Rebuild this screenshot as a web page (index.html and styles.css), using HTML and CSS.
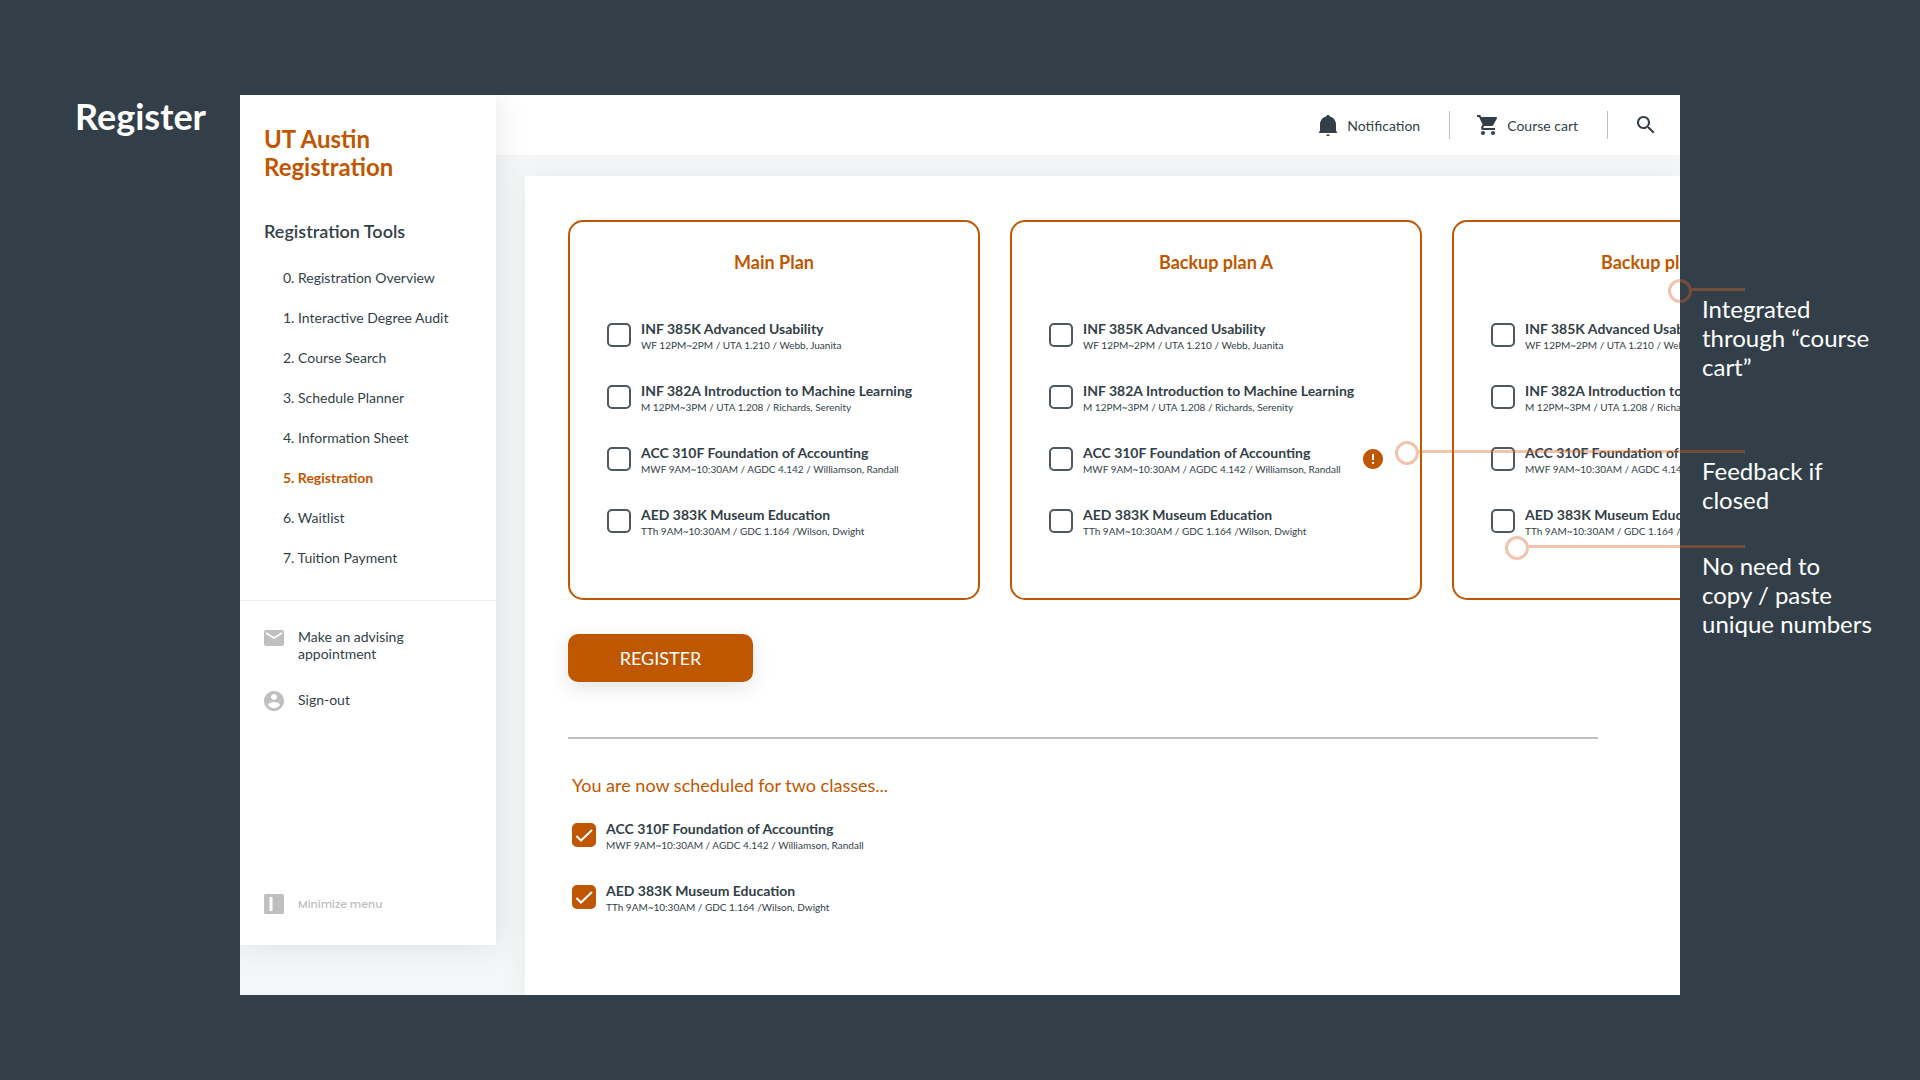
FILE: index.html
```html
<!DOCTYPE html>
<html lang="en">
<head>
<meta charset="utf-8">
<meta name="viewport" content="width=device-width, initial-scale=1">
<title>UT Austin Registration</title>
<link rel="stylesheet" href="styles.css">
</head>
<body>
<div class="board">
  <h1 class="board-title">Register</h1>

  <div class="app">
    <aside class="sidebar">
      <p class="brand">UT Austin Registration</p>
      <nav class="tools" aria-labelledby="tools-title">
        <h2 class="tools-title" id="tools-title">Registration Tools</h2>
        <ul class="tools-list">
          <li><a href="#">0. Registration Overview</a></li>
          <li><a href="#">1. Interactive Degree Audit</a></li>
          <li><a href="#">2. Course Search</a></li>
          <li><a href="#">3. Schedule Planner</a></li>
          <li><a href="#">4. Information Sheet</a></li>
          <li><a class="current" href="#" aria-current="page">5. Registration</a></li>
          <li><a href="#">6. Waitlist</a></li>
          <li><a href="#">7. Tuition Payment</a></li>
        </ul>
      </nav>
      <div class="account">
        <a class="side-link" href="#">
          <svg class="side-icon" viewBox="2 2 20 20" aria-hidden="true"><path d="M20 4H4c-1.100 0-1.990.900-1.990 2L2 18c0 1.100.900 2 2 2h16c1.100 0 2-.900 2-2V6c0-1.100-.900-2-2-2zm0 4l-8 5-8-5V6l8 5 8-5v2z"/></svg>
          <span>Make an advising appointment</span>
        </a>
        <a class="side-link" href="#">
          <svg class="side-icon" viewBox="2 2 20 20" aria-hidden="true"><path d="M12 2C6.480 2 2 6.480 2 12s4.480 10 10 10 10-4.480 10-10S17.520 2 12 2zm0 3c1.660 0 3 1.340 3 3s-1.340 3-3 3-3-1.340-3-3 1.340-3 3-3zm0 14.200c-2.500 0-4.710-1.280-6-3.220.030-1.990 4-3.080 6-3.080 1.990 0 5.970 1.090 6 3.080-1.290 1.940-3.500 3.220-6 3.220z"/></svg>
          <span>Sign-out</span>
        </a>
      </div>
      <button class="minimize" type="button">
        <svg class="side-icon" viewBox="0 0 20 20" aria-hidden="true"><path fill-rule="evenodd" d="M1.500 0h17A1.500 1.500 0 0 1 20 1.500v17a1.500 1.500 0 0 1-1.500 1.500h-17A1.500 1.500 0 0 1 0 18.500v-17A1.500 1.500 0 0 1 1.500 0zM5.500 3v14h3V3z"/></svg>
        <span>Minimize menu</span>
      </button>
    </aside>

    <div class="workspace">
      <header class="topbar">
        <a class="top-link" href="#">
          <svg class="bell" viewBox="3 1 18 21" aria-hidden="true"><path d="M12 22c1.100 0 2-.900 2-1.600h-4c0 .700.900 1.600 2 1.600zM20 17V10.500c0-3.900-2.600-7-6.200-7.900V2.600C13.800 1.700 13 1 12 1s-1.800.700-1.800 1.600C6.600 3.500 4 6.600 4 10.500V17l-1 1v1h18v-1z"/></svg>
          <span>Notification</span>
        </a>
        <a class="top-link" href="#">
          <svg class="cart" viewBox="1 2 20 20" aria-hidden="true"><path d="M7 18c-1.100 0-1.990.900-1.990 2S5.900 22 7 22s2-.900 2-2-.900-2-2-2zM1 2v2h2l3.600 7.590-1.350 2.450c-.160.280-.250.610-.250.960 0 1.100.900 2 2 2h12v-2H7.420c-.140 0-.250-.110-.250-.250l.030-.120.900-1.630h7.450c.750 0 1.410-.410 1.750-1.030l3.580-6.490c.080-.140.120-.310.120-.480 0-.550-.450-1-1-1H5.210l-.940-2H1zm16 16c-1.100 0-1.990.900-1.990 2s.890 2 1.990 2 2-.900 2-2-.900-2-2-2z"/></svg>
          <span>Course cart</span>
        </a>
        <button class="search" type="button" aria-label="Search">
          <svg viewBox="3 3 18 18" aria-hidden="true"><path d="M15.500 14h-.790l-.280-.270C15.410 12.590 16 11.110 16 9.500 16 5.910 13.090 3 9.500 3S3 5.910 3 9.500 5.910 16 9.500 16c1.610 0 3.090-.590 4.230-1.570l.270.280v.790l5 4.990L20.490 19l-4.990-5zm-6 0C7.010 14 5 11.990 5 9.500S7.010 5 9.500 5 14 7.010 14 9.500 11.990 14 9.500 14z"/></svg>
        </button>
      </header>

      <main class="panel">
        <div class="plans">
          <section class="plan">
            <h2 class="plan-title">Main Plan</h2>
            <ul class="courses">
              <li><label class="course"><input class="tick" type="checkbox"><span class="course-text"><b>INF 385K Advanced Usability</b><small>WF 12PM~2PM / UTA 1.210 / Webb, Juanita</small></span></label></li>
              <li><label class="course"><input class="tick" type="checkbox"><span class="course-text"><b>INF 382A Introduction to Machine Learning</b><small>M 12PM~3PM / UTA 1.208 / Richards, Serenity</small></span></label></li>
              <li><label class="course"><input class="tick" type="checkbox"><span class="course-text"><b>ACC 310F Foundation of Accounting</b><small>MWF 9AM~10:30AM / AGDC 4.142 / Williamson, Randall</small></span></label></li>
              <li><label class="course"><input class="tick" type="checkbox"><span class="course-text"><b>AED 383K Museum Education</b><small>TTh 9AM~10:30AM / GDC 1.164 /Wilson, Dwight</small></span></label></li>
            </ul>
          </section>
          <section class="plan">
            <h2 class="plan-title">Backup plan A</h2>
            <ul class="courses">
              <li><label class="course"><input class="tick" type="checkbox"><span class="course-text"><b>INF 385K Advanced Usability</b><small>WF 12PM~2PM / UTA 1.210 / Webb, Juanita</small></span></label></li>
              <li><label class="course"><input class="tick" type="checkbox"><span class="course-text"><b>INF 382A Introduction to Machine Learning</b><small>M 12PM~3PM / UTA 1.208 / Richards, Serenity</small></span></label></li>
              <li class="closed"><label class="course"><input class="tick" type="checkbox"><span class="course-text"><b>ACC 310F Foundation of Accounting</b><small>MWF 9AM~10:30AM / AGDC 4.142 / Williamson, Randall</small></span></label>
                <svg class="alert" viewBox="2 2 20 20" role="img" aria-label="Class closed"><path d="M12 2C6.480 2 2 6.480 2 12s4.480 10 10 10 10-4.480 10-10S17.520 2 12 2zm1 15h-2v-2h2v2zm0-4h-2V7h2v6z"/></svg></li>
              <li><label class="course"><input class="tick" type="checkbox"><span class="course-text"><b>AED 383K Museum Education</b><small>TTh 9AM~10:30AM / GDC 1.164 /Wilson, Dwight</small></span></label></li>
            </ul>
          </section>
          <section class="plan">
            <h2 class="plan-title">Backup plan B</h2>
            <ul class="courses">
              <li><label class="course"><input class="tick" type="checkbox"><span class="course-text"><b>INF 385K Advanced Usability</b><small>WF 12PM~2PM / UTA 1.210 / Webb, Juanita</small></span></label></li>
              <li><label class="course"><input class="tick" type="checkbox"><span class="course-text"><b>INF 382A Introduction to Machine Learning</b><small>M 12PM~3PM / UTA 1.208 / Richards, Serenity</small></span></label></li>
              <li><label class="course"><input class="tick" type="checkbox"><span class="course-text"><b>ACC 310F Foundation of Accounting</b><small>MWF 9AM~10:30AM / AGDC 4.142 / Williamson, Randall</small></span></label></li>
              <li><label class="course"><input class="tick" type="checkbox"><span class="course-text"><b>AED 383K Museum Education</b><small>TTh 9AM~10:30AM / GDC 1.164 /Wilson, Dwight</small></span></label></li>
            </ul>
          </section>
        </div>

        <button class="register" type="button">REGISTER</button>
        <hr class="rule">

        <section class="scheduled">
          <h2 class="scheduled-title">You are now scheduled for two classes...</h2>
          <ul class="courses">
            <li><label class="course"><input class="tick" type="checkbox" checked><span class="course-text"><b>ACC 310F Foundation of Accounting</b><small>MWF 9AM~10:30AM / AGDC 4.142 / Williamson, Randall</small></span></label></li>
            <li><label class="course"><input class="tick" type="checkbox" checked><span class="course-text"><b>AED 383K Museum Education</b><small>TTh 9AM~10:30AM / GDC 1.164 /Wilson, Dwight</small></span></label></li>
          </ul>
        </section>
      </main>
    </div>
  </div>

  <aside class="notes">
    <p class="note note-cart"><span class="pointer"></span>Integrated through “course cart”</p>
    <p class="note note-closed"><span class="pointer"></span>Feedback if closed</p>
    <p class="note note-numbers"><span class="pointer"></span>No need to copy / paste unique numbers</p>
  </aside>
</div>
</body>
</html>
```
FILE: styles.css
```css
:root {
  --ink: #333f48;
  --orange: #bf5700;
  --muted: #bfbfbf;
  --canvas: #f5f6f8;
}

*, *::before, *::after { box-sizing: border-box; }

body {
  margin: 0;
  background: var(--ink);
  color: var(--ink);
  font-family: Lato, "Open Sans", sans-serif;
  font-size: 14px;
  line-height: 17px;
}

h1, h2, p, ul { margin: 0; padding: 0; }
ul { list-style: none; }
a { color: inherit; text-decoration: none; }

button {
  border: 0;
  padding: 0;
  background: none;
  color: inherit;
  font: inherit;
  cursor: pointer;
}

.board {
  display: grid;
  grid-template-columns: 240px minmax(0, 1fr) 240px;
  min-height: 100vh;
  padding: 95px 0 85px;
}

.board-title {
  padding-left: 75px;
  color: #fff;
  font-size: 36px;
  line-height: 42px;
}

.app {
  display: flex;
  align-items: stretch;
  overflow: hidden;
  background: var(--canvas);
}

/* Sidebar */
.sidebar {
  position: relative;
  z-index: 1;
  flex: none;
  display: flex;
  flex-direction: column;
  width: 256px;
  margin-bottom: 50px;
  padding-top: 30px;
  background: #fff;
  box-shadow: 0 0 30px rgba(0, 0, 0, .1);
}

.brand {
  width: 180px;
  padding-left: 24px;
  color: var(--orange);
  font-size: 24px;
  font-weight: 700;
  line-height: 28px;
}

.tools {
  padding: 39px 24px 34px;
  border-bottom: 1px solid #ebebeb;
}

.tools-title {
  font-size: 18px;
  font-weight: 600;
  line-height: 22px;
}

.tools-list {
  display: flex;
  flex-direction: column;
  gap: 23px;
  padding: 27px 0 0 19px;
}

.current {
  color: var(--orange);
  font-weight: 700;
}

.account {
  display: flex;
  flex-direction: column;
  gap: 29px;
  padding: 27px 24px;
}

.side-link {
  display: flex;
  gap: 14px;
}

.side-link span { width: 130px; }

.side-icon {
  flex: none;
  width: 20px;
  height: 20px;
  fill: var(--muted);
}

.minimize {
  display: flex;
  align-items: center;
  gap: 14px;
  margin-top: auto;
  padding: 0 24px 31px;
  color: var(--muted);
  font-family: Poppins, Inter, sans-serif;
  font-size: 11px;
  font-weight: 500;
}

/* Main column */
.workspace {
  flex: 1;
  display: flex;
  flex-direction: column;
  min-width: 0;
}

.topbar {
  display: flex;
  align-items: center;
  justify-content: flex-end;
  height: 60px;
  padding-right: 25px;
  background: #fff;
}

.top-link {
  display: flex;
  align-items: center;
  gap: 10px;
  height: 28px;
  margin-right: 27px;
  padding-right: 29px;
  border-right: 1px solid var(--muted);
}

.topbar svg { fill: var(--ink); }
.bell { width: 18px; height: 21px; }
.cart { width: 20px; height: 20px; }

.search {
  display: flex;
  padding-left: 2px;
}

.search svg { width: 18px; height: 18px; }

.panel {
  flex: 1;
  margin: 21px 0 0 29px;
  padding: 44px 0 60px 43px;
  background: #fff;
  box-shadow: 0 0 30px rgba(0, 0, 0, .05);
}

.plans {
  display: flex;
  gap: 30px;
}

.plan {
  flex: none;
  width: 412px;
  padding: 29px 37px 62px;
  border: 2px solid var(--orange);
  border-radius: 15px;
}

.plan-title {
  margin-bottom: 47px;
  color: var(--orange);
  font-size: 18px;
  font-weight: 700;
  line-height: 22px;
  text-align: center;
}

.courses {
  display: flex;
  flex-direction: column;
  gap: 32px;
}

.course {
  display: flex;
  align-items: center;
  gap: 10px;
}

.course-text {
  display: flex;
  flex-direction: column;
  gap: 3px;
  white-space: nowrap;
}

.course-text b { font-weight: 700; }

.course-text small {
  font-size: 10px;
  line-height: 10px;
}

.tick {
  flex: none;
  appearance: none;
  width: 24px;
  height: 24px;
  margin: 0;
  border: 2px solid #4d5860;
  border-radius: 5px;
}

.tick:checked {
  border-color: var(--orange);
  background: var(--orange) url("data:image/svg+xml,%3Csvg xmlns='http://www.w3.org/2000/svg' viewBox='0 0 20 20'%3E%3Cpath d='M2.500 11l4.500 4.500L18 5' fill='none' stroke='white' stroke-width='2'/%3E%3C/svg%3E") center / 20px 20px no-repeat;
}

.closed {
  display: flex;
  align-items: center;
  justify-content: space-between;
}

.alert {
  flex: none;
  width: 20px;
  height: 20px;
  fill: var(--orange);
}

.register {
  display: block;
  width: 185px;
  height: 48px;
  margin-top: 34px;
  border-radius: 10px;
  background: var(--orange);
  box-shadow: 0 6px 20px rgba(0, 0, 0, .1);
  color: #fff;
  font-size: 18px;
}

.rule {
  height: 2px;
  margin: 55px 82px 35px 0;
  border: 0;
  background: var(--muted);
}

.scheduled { padding-left: 4px; }

.scheduled-title {
  margin-bottom: 24px;
  color: var(--orange);
  font-size: 18px;
  font-weight: 400;
  line-height: 22px;
}

/* Annotations */
.notes {
  position: relative;
  z-index: 2;
  padding-top: 193px;
  color: #fff;
  font-size: 24px;
  line-height: 29px;
}

.note {
  position: relative;
  padding: 6px 44px 0 22px;
}

.note-closed { margin-top: 69px; }
.note-numbers { margin-top: 31px; }

.pointer {
  position: absolute;
  top: -9px;
  right: 175px;
  left: -12px;
  height: 24px;
  color: #d9652a;
  opacity: .38;
}

.note-closed .pointer { left: -285px; }
.note-numbers .pointer { left: -175px; }

.pointer::before {
  content: "";
  position: absolute;
  top: 0;
  left: 0;
  width: 24px;
  height: 24px;
  border: 3px solid;
  border-radius: 50%;
}

.pointer::after {
  content: "";
  position: absolute;
  top: 9px;
  right: 0;
  left: 24px;
  height: 3px;
  background: currentColor;
}
```
